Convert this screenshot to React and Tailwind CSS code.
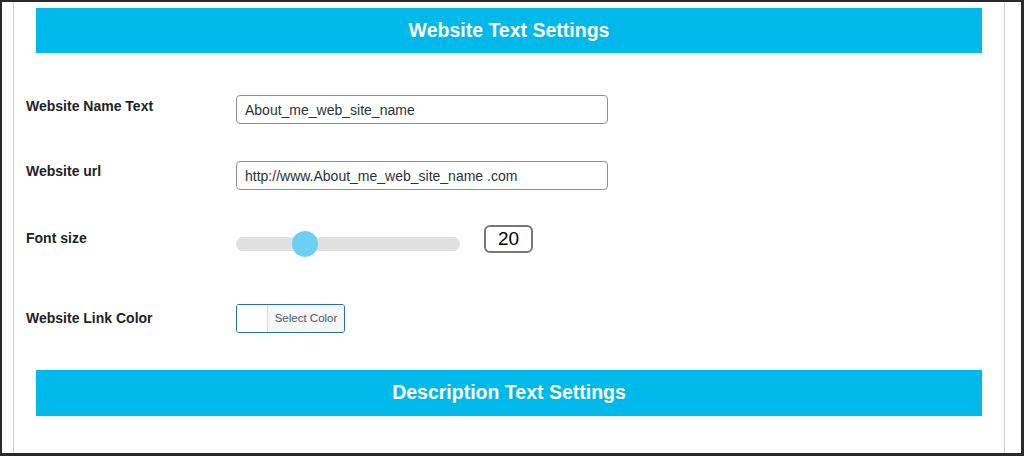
export default function App() {
  return (
    <div className="w-[1024px] h-[456px] bg-[#2a2a2a] pt-[2px] pl-[2px] pr-[3px] pb-[3px] font-['Liberation_Sans',Arial,sans-serif]">
      <div className="h-full bg-white pl-[11px] pr-[16px]">
        <div className="h-full border-l border-r border-[#d0d0d0] px-[22px] pt-[6px]">
          {/* Website text section */}
          <div className="h-[45px] bg-[#00b9eb] flex items-center justify-center">
            <h2 className="text-white font-bold text-[19.5px]">Website Text Settings</h2>
          </div>

          <div className="-ml-[10px] text-[14px] text-[#1d2327]">
            <div className="flex items-start mt-[42px]">
              <label className="w-[210px] font-bold leading-[20px] pt-[1px]">Website Name Text</label>
              <input
                type="text"
                defaultValue="About_me_web_site_name"
                className="w-[372px] h-[29px] border border-[#8c8f94] rounded-[4px] px-[8px] text-[14px] text-[#2c3338] outline-none"
              />
            </div>

            <div className="flex items-start mt-[37px]">
              <label className="w-[210px] font-bold leading-[20px]">Website url</label>
              <input
                type="text"
                defaultValue="http://www.About_me_web_site_name .com"
                className="w-[372px] h-[29px] border border-[#8c8f94] rounded-[4px] px-[8px] text-[14px] text-[#2c3338] outline-none"
              />
            </div>

            <div className="flex items-start mt-[35px]">
              <label className="w-[210px] font-bold leading-[20px] pt-[3px]">Font size</label>
              <div className="w-[224px] h-[28px] mt-[5px] flex items-center">
                <div className="relative w-full h-[14px] rounded-full bg-[#e0e0e0]">
                  <div className="absolute left-[56px] -top-[6px] w-[26px] h-[26px] rounded-full bg-[#6ccff5]" />
                </div>
              </div>
              <div className="ml-[24px] w-[49px] h-[28px] border-2 border-[#777] rounded-[6px] flex items-center justify-center text-[19px] text-black">
                20
              </div>
            </div>

            <div className="flex items-start mt-[46px]">
              <label className="w-[210px] font-bold leading-[20px] pt-[4px]">Website Link Color</label>
              <button className="flex h-[29px] w-[109px] border border-[#2271b1] rounded-[3px] overflow-hidden">
                <span className="w-[31px] h-full bg-white border-r border-[#dcdcde]" />
                <span className="flex-1 h-full bg-[#f6f7f7] flex items-center justify-center text-[11.5px] text-[#50575e]">
                  Select Color
                </span>
              </button>
            </div>
          </div>

          {/* Description text section */}
          <div className="mt-[37px] h-[46px] bg-[#00b9eb] flex items-center justify-center">
            <h2 className="text-white font-bold text-[19.5px]">Description Text Settings</h2>
          </div>
        </div>
      </div>
    </div>
  );
}
